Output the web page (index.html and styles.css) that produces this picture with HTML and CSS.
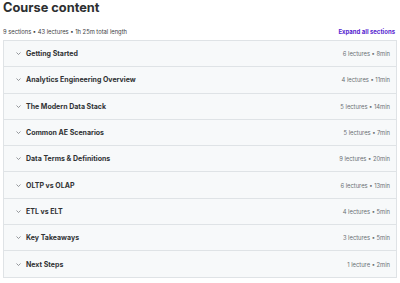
FILE: index.html
```html
<!DOCTYPE html>
<html>
<head>
<meta charset="utf-8">
<link rel="stylesheet" href="styles.css">
</head>
<body>
<div class="page">
  <h2 class="title">Course content</h2>
  <div class="meta">
    <span class="summary">9 sections • 43 lectures • 1h 25m total length</span>
    <span class="expand">Expand all sections</span>
  </div>
  <div class="accordion">
    <div class="row"><span class="chev"><svg viewBox="0 0 10 6" width="5" height="3"><path d="M1 1l4 4 4-4" fill="none" stroke="#6a6f73" stroke-width="1.4"/></svg></span><span class="name">Getting Started</span><span class="info">6 lectures • 8min</span></div>
    <div class="row"><span class="chev"><svg viewBox="0 0 10 6" width="5" height="3"><path d="M1 1l4 4 4-4" fill="none" stroke="#6a6f73" stroke-width="1.4"/></svg></span><span class="name">Analytics Engineering Overview</span><span class="info">4 lectures • 11min</span></div>
    <div class="row"><span class="chev"><svg viewBox="0 0 10 6" width="5" height="3"><path d="M1 1l4 4 4-4" fill="none" stroke="#6a6f73" stroke-width="1.4"/></svg></span><span class="name">The Modern Data Stack</span><span class="info">5 lectures • 14min</span></div>
    <div class="row"><span class="chev"><svg viewBox="0 0 10 6" width="5" height="3"><path d="M1 1l4 4 4-4" fill="none" stroke="#6a6f73" stroke-width="1.4"/></svg></span><span class="name">Common AE Scenarios</span><span class="info">5 lectures • 7min</span></div>
    <div class="row"><span class="chev"><svg viewBox="0 0 10 6" width="5" height="3"><path d="M1 1l4 4 4-4" fill="none" stroke="#6a6f73" stroke-width="1.4"/></svg></span><span class="name">Data Terms &amp; Definitions</span><span class="info">9 lectures • 20min</span></div>
    <div class="row"><span class="chev"><svg viewBox="0 0 10 6" width="5" height="3"><path d="M1 1l4 4 4-4" fill="none" stroke="#6a6f73" stroke-width="1.4"/></svg></span><span class="name">OLTP vs OLAP</span><span class="info">6 lectures • 13min</span></div>
    <div class="row"><span class="chev"><svg viewBox="0 0 10 6" width="5" height="3"><path d="M1 1l4 4 4-4" fill="none" stroke="#6a6f73" stroke-width="1.4"/></svg></span><span class="name">ETL vs ELT</span><span class="info">4 lectures • 5min</span></div>
    <div class="row"><span class="chev"><svg viewBox="0 0 10 6" width="5" height="3"><path d="M1 1l4 4 4-4" fill="none" stroke="#6a6f73" stroke-width="1.4"/></svg></span><span class="name">Key Takeaways</span><span class="info">3 lectures • 5min</span></div>
    <div class="row"><span class="chev"><svg viewBox="0 0 10 6" width="5" height="3"><path d="M1 1l4 4 4-4" fill="none" stroke="#6a6f73" stroke-width="1.4"/></svg></span><span class="name">Next Steps</span><span class="info">1 lecture • 2min</span></div>
  </div>
</div>
</body>
</html>
```
FILE: styles.css
```css
* { box-sizing: border-box; }
html, body { margin: 0; padding: 0; background: #fff; }
body { font-family: Inter, "Noto Sans", sans-serif; color: #2d2f31; }
.page { padding: 0 3px; }
.title {
  margin: 0;
  font-size: 12.8px;
  line-height: 15px;
  font-weight: 700;
  letter-spacing: 0;
}
.meta {
  display: flex;
  justify-content: space-between;
  align-items: center;
  margin-top: 9px;
  height: 15px;
  padding-right: 2px;
}
.summary { font-size: 5.8px; color: #3e4143; }
.expand { font-size: 6px; font-weight: 700; color: #5624d0; }
.accordion {
  border: 1px solid #dfe3e6;
  border-bottom: none;
  width: 394px;
  margin-top: 1px;
}
.row {
  display: flex;
  align-items: center;
  height: 26.3px;
  background: #f7f9fa;
  border-bottom: 1px solid #dfe3e6;
  padding: 0 6px 0 12px;
}
.chev { width: 10px; display: flex; align-items: center; }
.name { font-size: 7px; font-weight: 700; flex: 1; color: #303234; }
.info { font-size: 5.8px; color: #6a6f73; }
```
